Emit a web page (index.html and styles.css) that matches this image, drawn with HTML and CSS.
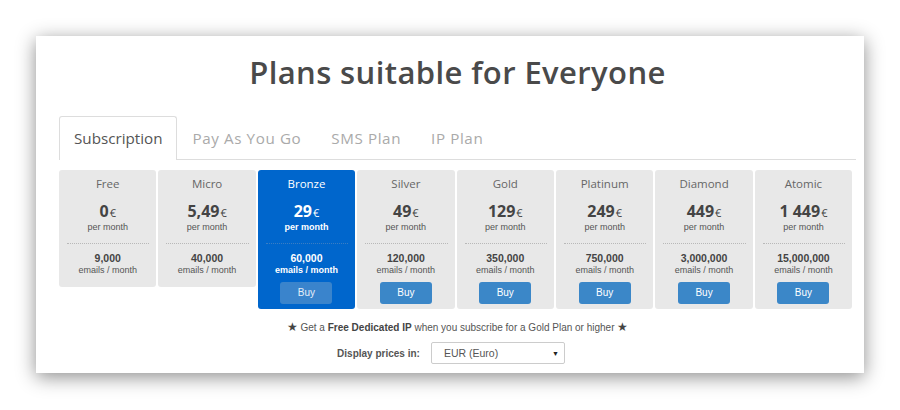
FILE: index.html
```html
<!DOCTYPE html>
<html>
<head>
<meta charset="utf-8">
<link rel="stylesheet" href="styles.css">
</head>
<body>
<div class="panel">
  <h1 class="title">Plans suitable for Everyone</h1>
  <div class="tabs">
    <div class="tab active">Subscription</div>
    <div class="tab">Pay As You Go</div>
    <div class="tab">SMS Plan</div>
    <div class="tab">IP Plan</div>
  </div>
  <div class="plans">
    <div class="plan short">
      <div class="name">Free</div>
      <div class="price">0<span class="cur">€</span></div>
      <div class="per">per month</div>
      <div class="sep"></div>
      <div class="qty">9,000</div>
      <div class="unit">emails / month</div>
    </div>
    <div class="plan short">
      <div class="name">Micro</div>
      <div class="price">5,49<span class="cur">€</span></div>
      <div class="per">per month</div>
      <div class="sep"></div>
      <div class="qty">40,000</div>
      <div class="unit">emails / month</div>
    </div>
    <div class="plan featured">
      <div class="name">Bronze</div>
      <div class="price">29<span class="cur">€</span></div>
      <div class="per">per month</div>
      <div class="sep"></div>
      <div class="qty">60,000</div>
      <div class="unit">emails / month</div>
      <div class="buy">Buy</div>
    </div>
    <div class="plan">
      <div class="name">Silver</div>
      <div class="price">49<span class="cur">€</span></div>
      <div class="per">per month</div>
      <div class="sep"></div>
      <div class="qty">120,000</div>
      <div class="unit">emails / month</div>
      <div class="buy">Buy</div>
    </div>
    <div class="plan">
      <div class="name">Gold</div>
      <div class="price">129<span class="cur">€</span></div>
      <div class="per">per month</div>
      <div class="sep"></div>
      <div class="qty">350,000</div>
      <div class="unit">emails / month</div>
      <div class="buy">Buy</div>
    </div>
    <div class="plan">
      <div class="name">Platinum</div>
      <div class="price">249<span class="cur">€</span></div>
      <div class="per">per month</div>
      <div class="sep"></div>
      <div class="qty">750,000</div>
      <div class="unit">emails / month</div>
      <div class="buy">Buy</div>
    </div>
    <div class="plan">
      <div class="name">Diamond</div>
      <div class="price">449<span class="cur">€</span></div>
      <div class="per">per month</div>
      <div class="sep"></div>
      <div class="qty">3,000,000</div>
      <div class="unit">emails / month</div>
      <div class="buy">Buy</div>
    </div>
    <div class="plan">
      <div class="name">Atomic</div>
      <div class="price">1 449<span class="cur">€</span></div>
      <div class="per">per month</div>
      <div class="sep"></div>
      <div class="qty">15,000,000</div>
      <div class="unit">emails / month</div>
      <div class="buy">Buy</div>
    </div>
  </div>
  <p class="note"><span class="star">★</span> Get a <b>Free Dedicated IP</b> when you subscribe for a Gold Plan or higher <span class="star">★</span></p>
  <div class="currency">
    <span class="label">Display prices in:</span>
    <div class="select"><span>EUR (Euro)</span><span class="arrow">▼</span></div>
  </div>
</div>
</body>
</html>
```

FILE: styles.css
```css
html, body {
  margin: 0;
  padding: 0;
  background: #ffffff;
}
body {
  width: 900px;
  height: 410px;
  overflow: hidden;
  font-family: "Liberation Sans", Arial, sans-serif;
}
.panel {
  margin: 36px 0 0 36px;
  width: 828px;
  height: 337px;
  background: #fff;
  box-shadow: 0 4px 18px rgba(0,0,0,0.45);
  box-sizing: border-box;
  padding: 17px 8px 0 23px;
}
.title {
  margin: 0;
  text-align: center;
  font-family: "Open Sans", "Noto Sans", sans-serif;
  font-weight: 600;
  font-size: 31px;
  line-height: 38px;
  color: #4a4a4a;
  letter-spacing: 0.4px;
}
.tabs {
  display: flex;
  margin-top: 25px;
  border-bottom: 1px solid #dddddd;
  height: 43px;
}
.tab {
  font-family: "Open Sans", "Noto Sans", sans-serif;
  font-size: 15.2px;
  color: #aaaaaa;
  padding: 0 14px;
  line-height: 42px;
  letter-spacing: 0.6px;
  border: 1px solid transparent;
  border-bottom: none;
  border-radius: 3px 3px 0 0;
}
.tab.active {
  color: #555555;
  letter-spacing: 0;
  border-color: #dddddd;
  background: #fff;
  height: 43px;
  margin-bottom: -1px;
}
.plans {
  display: grid;
  grid-template-columns: repeat(8, 97.4px);
  column-gap: 2px;
  margin-top: 10px;
  width: 793px;
  align-items: start;
}
.plan {
  background: #e8e8e8;
  border-radius: 3px;
  height: 139px;
  box-sizing: border-box;
  padding-top: 6px;
  text-align: center;
  color: #555;
}
.plan.short {
  height: 117px;
}
.name {
  font-family: "Open Sans", "Noto Sans", sans-serif;
  font-size: 11.5px;
  line-height: 16px;
  color: #666;
}
.price {
  margin-top: 10px;
  font-family: "Open Sans", "Noto Sans", sans-serif;
  font-weight: 700;
  font-size: 16px;
  line-height: 18px;
  color: #444;
}
.cur {
  font-size: 11px;
  font-weight: 400;
  margin-left: 1px;
}
.per {
  font-size: 9px;
  line-height: 11px;
  color: #555;
}
.sep {
  margin: 10px 7px 8px 8px;
  border-top: 1px dotted #b8b8b8;
  height: 0;
}
.qty {
  font-weight: 700;
  font-size: 10.5px;
  line-height: 13px;
  color: #444;
}
.unit {
  font-size: 9px;
  line-height: 11px;
  color: #555;
}
.buy {
  width: 52px;
  height: 22px;
  margin: 6px auto 0;
  background: #3b87c8;
  border-radius: 3px;
  color: #fff;
  font-size: 10px;
  line-height: 22px;
}
.plan.featured {
  background: #0066cc;
  color: #fff;
}
.plan.featured .name,
.plan.featured .price,
.plan.featured .per,
.plan.featured .qty,
.plan.featured .unit {
  color: #fff;
}
.plan.featured .per,
.plan.featured .unit {
  font-weight: 700;
}
.plan.featured .sep {
  border-top-color: #3a7ec4;
}
.plan.featured .buy {
  background: #3a84cc;
  color: #e6eef8;
}
.note {
  margin: 11px 0 0;
  text-align: center;
  font-size: 10px;
  line-height: 14px;
  color: #555;
}
.note .star {
  font-size: 12px;
  color: #444;
}
.note b {
  color: #444;
}
.currency {
  display: flex;
  justify-content: center;
  align-items: center;
  gap: 11px;
  margin-top: 7px;
  padding-left: 0;
  padding-right: 13px;
}
.label {
  font-size: 10px;
  font-weight: 700;
  color: #555;
  letter-spacing: 0;
}
.select {
  width: 134px;
  height: 22px;
  box-sizing: border-box;
  border: 1px solid #cccccc;
  border-radius: 2px;
  display: flex;
  align-items: center;
  justify-content: space-between;
  padding: 0 5px 0 12px;
  font-size: 10.5px;
  color: #555;
}
.arrow {
  font-size: 7px;
  color: #222;
}
```
